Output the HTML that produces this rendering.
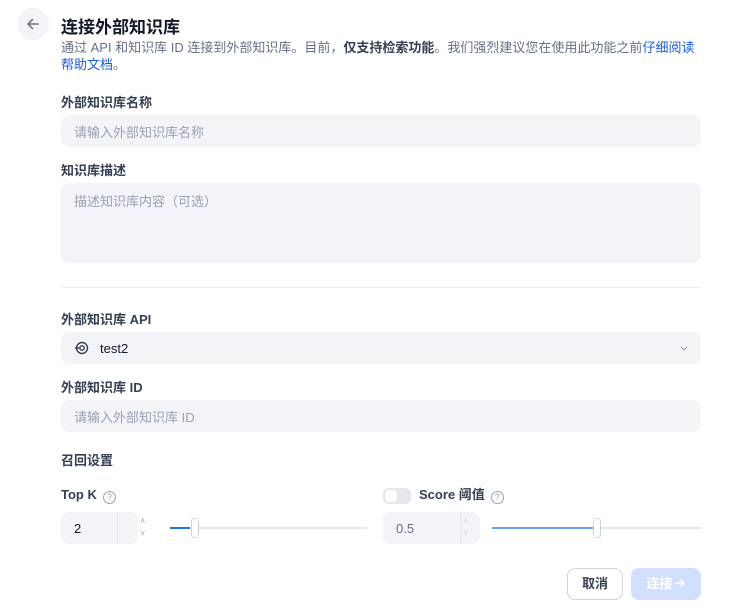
<!DOCTYPE html><html><head><meta charset="utf-8"><style>
*{box-sizing:border-box;margin:0;padding:0}
body{width:755px;height:615px;background:#fff;font-family:"Liberation Sans","Noto Sans CJK SC",sans-serif;color:#101828;position:relative;overflow:hidden}
.a{position:absolute}
.lbl{font-size:13px;font-weight:bold;color:#354052;line-height:16px}
.inp{background:#f2f4f7;border-radius:8px;font-size:13px;color:#98a2b3;padding-left:13px;display:flex;align-items:center}
.q{display:inline-block;width:13px;height:13px;border:1px solid #98a2b3;border-radius:50%;font-size:9px;color:#98a2b3;text-align:center;line-height:11px;vertical-align:-1px;margin-left:6px;font-weight:normal}
</style></head><body>
<div class="a" style="left:17px;top:8px;width:32px;height:32px;border-radius:50%;background:#f2f4f7"></div>
<svg class="a" style="left:25px;top:16px" width="16" height="16" viewBox="0 0 16 16"><path d="M13 8H3M7.5 3.5L3 8l4.5 4.5" stroke="#667085" stroke-width="1.5" fill="none" stroke-linecap="round" stroke-linejoin="round"/></svg>
<div class="a" style="left:61px;top:13px;font-size:17px;font-weight:bold">连接外部知识库</div>
<div class="a" style="left:61px;top:39px;width:645px;font-size:13px;line-height:17px;color:#667085">通过 API 和知识库 ID 连接到外部知识库。目前，<b style="color:#354052">仅支持检索功能</b>。我们强烈建议您在使用此功能之前<span style="color:#155eef">仔细阅读</span><br><span style="color:#155eef">帮助文档</span>。</div>
<div class="a lbl" style="left:61px;top:95px">外部知识库名称</div>
<div class="a inp" style="left:61px;top:115px;width:640px;height:32px">请输入外部知识库名称</div>
<div class="a lbl" style="left:61px;top:163px">知识库描述</div>
<div class="a inp" style="left:61px;top:183px;width:640px;height:80px;align-items:flex-start;padding-top:8px">描述知识库内容（可选）</div>
<div class="a" style="left:61px;top:287px;width:640px;height:1px;background:#eaecf0"></div>
<div class="a lbl" style="left:61px;top:312px">外部知识库 API</div>
<div class="a inp" style="left:61px;top:332px;width:640px;height:32px;color:#101828;padding-left:13px"><svg width="16" height="16" viewBox="0 0 16 16" style="margin-right:10px"><circle cx="8" cy="8" r="5.5" stroke="#354052" stroke-width="1.4" fill="none"/><circle cx="8" cy="8" r="2.2" stroke="#354052" stroke-width="1.4" fill="none"/><path d="M1 8h4" stroke="#354052" stroke-width="1.4"/></svg>test2</div>
<svg class="a" style="left:679px;top:343px" width="10" height="10" viewBox="0 0 10 10"><path d="M2 4l3 3 3-3" stroke="#98a2b3" fill="none"/></svg>
<div class="a lbl" style="left:61px;top:380px">外部知识库 ID</div>
<div class="a inp" style="left:61px;top:400px;width:640px;height:32px">请输入外部知识库 ID</div>
<div class="a lbl" style="left:61px;top:453px">召回设置</div>
<div class="a lbl" style="left:61px;top:487px">Top K<span class="q">?</span></div>
<div class="a inp" style="left:61px;top:512px;width:77px;height:32px;color:#101828">2</div>
<div class="a" style="left:117px;top:512px;width:1px;height:32px;background:#e4e7ec"></div>
<div class="a" style="left:140px;top:515px;font-size:9px;color:#98a2b3;line-height:12px">˄<br>˅</div>
<div class="a" style="left:170px;top:527px;width:197px;height:2px;background:#e4e7ec"></div>
<div class="a" style="left:170px;top:527px;width:20px;height:2px;background:#296dff"></div>
<div class="a" style="left:191px;top:518px;width:8px;height:20px;border:1px solid #d0d5dd;border-radius:3px;background:#fff"></div>
<div class="a" style="left:383px;top:488px;width:28px;height:16px;border-radius:6px;background:#e4e7ec"></div>
<div class="a" style="left:385px;top:490px;width:12px;height:12px;border-radius:4px;background:#fff"></div>
<div class="a lbl" style="left:419px;top:487px">Score 阈值<span class="q">?</span></div>
<div class="a inp" style="left:383px;top:512px;width:97px;height:32px;color:#667085">0.5</div>
<div class="a" style="left:460px;top:512px;width:1px;height:32px;background:#e4e7ec"></div>
<div class="a" style="left:463px;top:515px;font-size:9px;color:#d0d5dd;line-height:12px">˄<br>˅</div>
<div class="a" style="left:492px;top:527px;width:209px;height:2px;background:#e4e7ec"></div>
<div class="a" style="left:492px;top:527px;width:104px;height:2px;background:#6e9ef8"></div>
<div class="a" style="left:593px;top:518px;width:8px;height:20px;border:1px solid #d0d5dd;border-radius:3px;background:#fff"></div>
<div class="a" style="left:567px;top:568px;width:56px;height:32px;border:1px solid #d0d5dd;border-radius:8px;font-size:13px;font-weight:bold;color:#354052;text-align:center;line-height:30px">取消</div>
<div class="a" style="left:631px;top:568px;width:70px;height:32px;border-radius:8px;background:#d1e0ff;font-size:13px;font-weight:bold;color:#fff;text-align:center;line-height:32px">连接<svg width="12" height="12" viewBox="0 0 12 12" style="vertical-align:-1px;margin-left:1px"><path d="M1 6h9M6.5 2.5L10 6l-3.5 3.5" stroke="#fff" stroke-width="1.5" fill="none"/></svg></div>
</body></html>
